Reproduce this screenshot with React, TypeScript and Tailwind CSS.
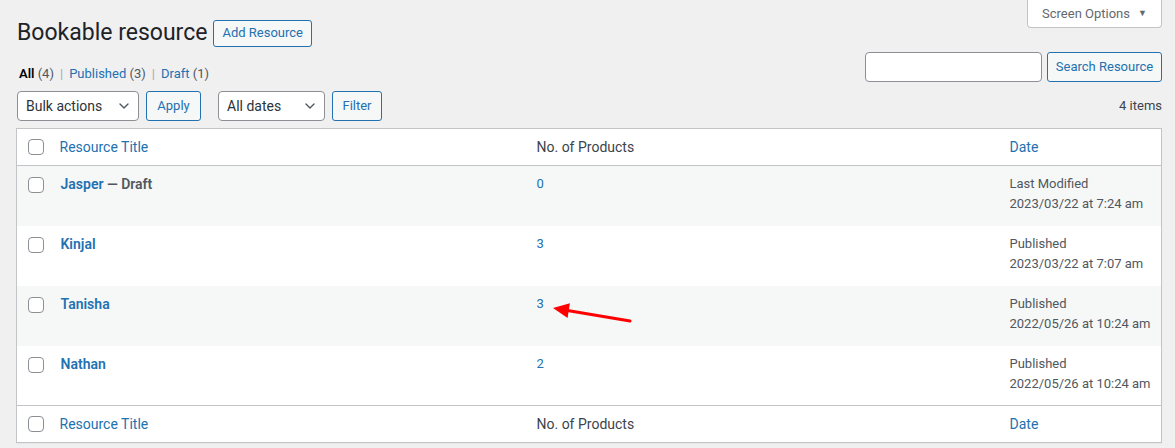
import { ChevronDown } from 'lucide-react';

const rows = [
  { title: 'Jasper', state: 'Draft', count: '0', status: 'Last Modified', date: '2023/03/22 at 7:24 am' },
  { title: 'Kinjal', count: '3', status: 'Published', date: '2023/03/22 at 7:07 am' },
  { title: 'Tanisha', count: '3', status: 'Published', date: '2022/05/26 at 10:24 am', arrow: true },
  { title: 'Nathan', count: '2', status: 'Published', date: '2022/05/26 at 10:24 am' },
];

function Checkbox() {
  return <span className="block h-4 w-4 rounded-[4px] border border-[#8c8f94] bg-white" />;
}

function Select({ label, width }: { label: string; width: string }) {
  return (
    <div className={`flex h-[30px] items-center justify-between rounded-[4px] border border-[#8c8f94] bg-white pl-2 pr-[6px] text-[14px] text-[#2c3338] ${width}`}>
      <span>{label}</span>
      <ChevronDown className="h-4 w-4 text-[#50575e]" strokeWidth={2} />
    </div>
  );
}

function Button({ children, width }: { children: React.ReactNode; width: string }) {
  return (
    <button className={`flex h-[30px] items-center justify-center rounded-[3px] border border-[#2271b1] bg-[#f6f7f7] text-[13px] text-[#2271b1] ${width}`}>
      {children}
    </button>
  );
}

function Arrow() {
  return (
    <svg className="absolute left-[21px] top-[12px]" width="90" height="30" viewBox="0 0 90 30">
      <line x1="18" y1="12.3" x2="82" y2="23" stroke="#f00" strokeWidth="3" strokeLinecap="round" />
      <polygon points="5,10 21.9,5.3 19.6,20" fill="#f00" />
    </svg>
  );
}

function HeadRow() {
  return (
    <tr>
      <td className="h-[37px] pl-[11px] align-middle">
        <Checkbox />
      </td>
      <th className="px-[10px] text-left align-middle text-[14px] font-normal text-[#2271b1]">Resource Title</th>
      <th className="px-[10px] text-left align-middle text-[14px] font-normal text-[#3c434a]">No. of Products</th>
      <th className="px-[10px] text-left align-middle text-[14px] font-normal text-[#2271b1]">Date</th>
    </tr>
  );
}

export default function App() {
  return (
    <div
      className="min-h-screen bg-[#f0f0f1] pl-4 pr-[13px] text-[13px] text-[#3c434a]"
      style={{ fontFamily: 'Roboto, "Noto Sans", sans-serif' }}
    >
      <div className="flex items-start justify-between">
        <div className="flex items-center gap-[6px] pl-px pt-[18px]">
          <h1 className="text-[23px] leading-[30px] font-normal text-[#1d2327]">Bookable resource</h1>
          <button className="flex h-[27px] items-center rounded-[3px] border border-[#2271b1] bg-[#f6f7f7] px-[8px] text-[13px] text-[#2271b1]">
            Add Resource
          </button>
        </div>
        <div className="flex h-[28px] w-[135px] items-center justify-center gap-[8px] rounded-b-[4px] border border-t-0 border-[#c3c4c7] bg-white text-[13px] text-[#646970]">
          <span>Screen Options</span>
          <span className="text-[9px]">▼</span>
        </div>
      </div>

      <div className="mt-[4px] flex items-end justify-between">
        <div className="pl-[3px] text-[13px] leading-[16px]">
          <span className="font-semibold text-black">All</span> <span className="text-[#50575e]">(4)</span>
          <span className="mx-[6px] text-[#a7aaad]">|</span>
          <span className="text-[#2271b1]">Published</span> <span className="text-[#50575e]">(3)</span>
          <span className="mx-[6px] text-[#a7aaad]">|</span>
          <span className="text-[#2271b1]">Draft</span> <span className="text-[#50575e]">(1)</span>
        </div>
        <div className="flex items-center gap-[5px]">
          <div className="h-[30px] w-[177px] rounded-[4px] border border-[#8c8f94] bg-white" />
          <Button width="w-[115px]">Search Resource</Button>
        </div>
      </div>

      <div className="mt-[9px] flex items-center justify-between pl-px">
        <div className="flex items-center">
          <Select label="Bulk actions" width="w-[122px]" />
          <div className="ml-[7px]">
            <Button width="w-[55px]">Apply</Button>
          </div>
          <div className="ml-[17px]">
            <Select label="All dates" width="w-[107px]" />
          </div>
          <div className="ml-[7px]">
            <Button width="w-[50px]">Filter</Button>
          </div>
        </div>
        <span className="text-[13px] text-[#3c434a]">4 items</span>
      </div>

      <table className="mt-[7px] w-full table-fixed border border-[#c3c4c7] bg-white shadow-[0_1px_1px_rgba(0,0,0,0.04)]">
        <colgroup>
          <col className="w-[33px]" />
          <col className="w-[477px]" />
          <col className="w-[473px]" />
          <col />
        </colgroup>
        <thead className="border-b border-[#c3c4c7]">
          <HeadRow />
        </thead>
        <tbody>
          {rows.map((r, i) => (
            <tr key={r.title} className={i % 2 === 0 ? 'bg-[#f6f7f7]' : 'bg-white'}>
              <td className="h-[60px] pl-[11px] pt-[11px] align-top">
                <Checkbox />
              </td>
              <td className="px-[11px] pt-[8px] align-top text-[14px] leading-[20px] font-semibold">
                <span className="text-[#2271b1]">{r.title}</span>
                {r.state && <span className="text-[#50575e]"> — {r.state}</span>}
              </td>
              <td className="relative px-[10px] pt-[8px] align-top leading-[20px] text-[#2271b1]">
                {r.count}
                {r.arrow && <Arrow />}
              </td>
              <td className="whitespace-nowrap px-[10px] pt-[8px] align-top leading-[20px] text-[#50575e]">
                {r.status}
                <br />
                {r.date}
              </td>
            </tr>
          ))}
        </tbody>
        <tfoot className="border-t border-[#c3c4c7]">
          <HeadRow />
        </tfoot>
      </table>
    </div>
  );
}
